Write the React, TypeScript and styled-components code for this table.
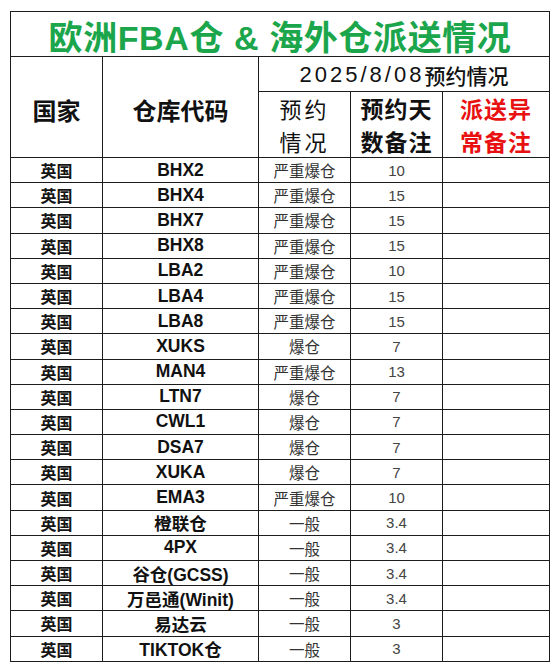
import React from "react";
import styled, { createGlobalStyle } from "styled-components";

const Global = createGlobalStyle`
  html, body { margin: 0; padding: 0; background: #ffffff; }
  body { font-family: "Liberation Sans", "Noto Sans CJK SC", sans-serif; color: #111; }
`;

const Page = styled.div`
  width: 560px;
  height: 672px;
  background: #fff;
  padding: 11px 0 0 10px;
  box-sizing: border-box;
`;

const Sheet = styled.div`
  display: grid;
  grid-template-columns: 91px 155px 91px 91px 106px;
  grid-template-rows: 44px 34px 65px repeat(20, 24.2px);
  gap: 1px;
  width: max-content;
  background: #1c1c1c;
  border: 1px solid #1c1c1c;
`;

const Cell = styled.div<{ $col?: string; $row?: string }>`
  background: #fff;
  display: flex;
  align-items: center;
  justify-content: center;
  text-align: center;
  overflow: hidden;
  white-space: nowrap;
  ${(p) => (p.$col ? `grid-column: ${p.$col};` : "")}
  ${(p) => (p.$row ? `grid-row: ${p.$row};` : "")}
`;

const Title = styled(Cell)`
  font-family: "Liberation Sans", "Noto Sans CJK SC", sans-serif;
  font-size: 34px;
  font-weight: 700;
  color: #1ba64c;
  letter-spacing: 0.6px;
  padding-top: 2px;
`;

const BigHead = styled(Cell)`
  font-family: "Noto Sans CJK SC", sans-serif;
  font-size: 24px;
  font-weight: 700;
  color: #111;
  padding-top: 4px;
`;

const DateHead = styled(Cell)`
  font-family: "Liberation Sans", "Noto Sans CJK SC", sans-serif;
  font-size: 21px;
  font-weight: 500;
  color: #111;
  padding-top: 2px;
`;

const Digits = styled.span`
  font-size: 22px;
  letter-spacing: 3px;
`;

const SubHead = styled(Cell)<{ $bold?: boolean; $red?: boolean }>`
  font-family: "Noto Sans CJK SC", sans-serif;
  font-size: ${(p) => (p.$bold ? "23px" : "22px")};
  font-weight: ${(p) => (p.$bold ? 700 : 400)};
  color: ${(p) => (p.$red ? "#e81010" : "#111")};
  letter-spacing: ${(p) => (p.$bold ? "1px" : "3px")};
  line-height: 33px;
  white-space: normal;
  flex-direction: column;
`;

const Country = styled(Cell)`
  font-family: "Noto Sans CJK SC", sans-serif;
  font-size: 16px;
  font-weight: 700;
  color: #151515;
`;

const Code = styled(Cell)`
  font-family: "Liberation Sans", "Noto Sans CJK SC", sans-serif;
  font-size: 17.5px;
  font-weight: 700;
  color: #111;
`;

const Status = styled(Cell)`
  font-family: "Noto Sans CJK SC", sans-serif;
  font-size: 15.5px;
  font-weight: 400;
  color: #333;
`;

const Days = styled(Cell)`
  font-family: "Liberation Sans", sans-serif;
  font-size: 15px;
  font-weight: 400;
  color: #444;
`;

const Note = styled(Cell)``;

type Row = { code: string; status: string; days: string };

const rows: Row[] = [
  { code: "BHX2", status: "严重爆仓", days: "10" },
  { code: "BHX4", status: "严重爆仓", days: "15" },
  { code: "BHX7", status: "严重爆仓", days: "15" },
  { code: "BHX8", status: "严重爆仓", days: "15" },
  { code: "LBA2", status: "严重爆仓", days: "10" },
  { code: "LBA4", status: "严重爆仓", days: "15" },
  { code: "LBA8", status: "严重爆仓", days: "15" },
  { code: "XUKS", status: "爆仓", days: "7" },
  { code: "MAN4", status: "严重爆仓", days: "13" },
  { code: "LTN7", status: "爆仓", days: "7" },
  { code: "CWL1", status: "爆仓", days: "7" },
  { code: "DSA7", status: "爆仓", days: "7" },
  { code: "XUKA", status: "爆仓", days: "7" },
  { code: "EMA3", status: "严重爆仓", days: "10" },
  { code: "橙联仓", status: "一般", days: "3.4" },
  { code: "4PX", status: "一般", days: "3.4" },
  { code: "谷仓(GCSS)", status: "一般", days: "3.4" },
  { code: "万邑通(Winit)", status: "一般", days: "3.4" },
  { code: "易达云", status: "一般", days: "3" },
  { code: "TIKTOK仓", status: "一般", days: "3" },
];

export default function App() {
  return (
    <Page>
      <Global />
      <Sheet>
        <Title $col="1 / -1">欧洲FBA仓 &amp; 海外仓派送情况</Title>
        <BigHead $col="1" $row="2 / 4">国家</BigHead>
        <BigHead $col="2" $row="2 / 4">仓库代码</BigHead>
        <DateHead $col="3 / 6" $row="2">
          <Digits>2025/8/08</Digits>预约情况
        </DateHead>
        <SubHead $col="3" $row="3">
          <span>预约</span>
          <span>情况</span>
        </SubHead>
        <SubHead $col="4" $row="3" $bold>
          <span>预约天</span>
          <span>数备注</span>
        </SubHead>
        <SubHead $col="5" $row="3" $bold $red>
          <span>派送异</span>
          <span>常备注</span>
        </SubHead>
        {rows.map((r) => (
          <React.Fragment key={r.code}>
            <Country>英国</Country>
            <Code>{r.code}</Code>
            <Status>{r.status}</Status>
            <Days>{r.days}</Days>
            <Note />
          </React.Fragment>
        ))}
      </Sheet>
    </Page>
  );
}
